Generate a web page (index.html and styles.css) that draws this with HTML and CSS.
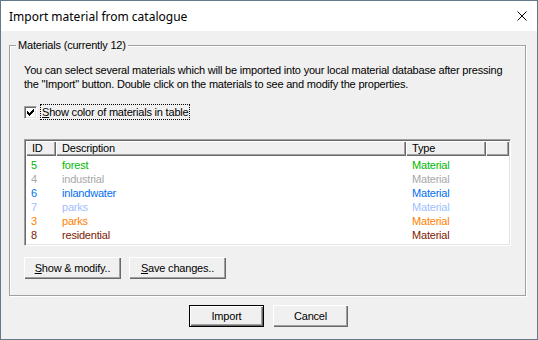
FILE: index.html
```html
<!DOCTYPE html>
<html lang="en">
<head>
    <meta charset="UTF-8">
    <title>Import material from catalogue</title>
    <link rel="stylesheet" href="styles.css">
</head>
<body>
    <div class="dialog">
        <!-- Заголовок окна -->
        <div class="titlebar">
            <span class="title">Import material from catalogue</span>
            <svg class="close" width="10" height="10" viewBox="0 0 10 10">
                <path d="M0.5 0.5 L9.5 9.5 M9.5 0.5 L0.5 9.5" stroke="#000" stroke-width="1" fill="none"/>
            </svg>
        </div>

        <div class="content">
            <fieldset class="group">
                <legend>Materials (currently 12)</legend>
                <p class="intro">You can select several materials which will be imported into your local material database after pressing<br>the "Import" button. Double click on the materials to see and modify the properties.</p>

                <label class="check">
                    <span class="box">
                        <svg width="7" height="7" viewBox="0 0 7 7" shape-rendering="crispEdges">
                            <rect x="0" y="2" width="1" height="3"/>
                            <rect x="1" y="3" width="1" height="3"/>
                            <rect x="2" y="4" width="1" height="3"/>
                            <rect x="3" y="3" width="1" height="3"/>
                            <rect x="4" y="2" width="1" height="3"/>
                            <rect x="5" y="1" width="1" height="3"/>
                            <rect x="6" y="0" width="1" height="3"/>
                        </svg>
                    </span>
                    <span class="check-label"><u>S</u>how color of materials in table</span>
                </label>

                <!-- Таблица материалов -->
                <div class="list">
                    <table>
                        <colgroup>
                            <col class="col-id">
                            <col class="col-desc">
                            <col class="col-type">
                            <col>
                        </colgroup>
                        <thead>
                            <tr><th>ID</th><th>Description</th><th>Type</th><th></th></tr>
                        </thead>
                        <tbody>
                            <tr class="c-green"><td class="id">5</td><td>forest</td><td>Material</td><td></td></tr>
                            <tr class="c-gray"><td class="id">4</td><td>industrial</td><td>Material</td><td></td></tr>
                            <tr class="c-blue"><td class="id">6</td><td>inlandwater</td><td>Material</td><td></td></tr>
                            <tr class="c-lightblue"><td class="id">7</td><td>parks</td><td>Material</td><td></td></tr>
                            <tr class="c-orange"><td class="id">3</td><td>parks</td><td>Material</td><td></td></tr>
                            <tr class="c-brown"><td class="id">8</td><td>residential</td><td>Material</td><td></td></tr>
                        </tbody>
                    </table>
                </div>

                <div class="group-buttons">
                    <button class="btn btn-wide"><u>S</u>how &amp; modify..</button>
                    <button class="btn btn-wide"><u>S</u>ave changes..</button>
                </div>
            </fieldset>

            <div class="dialog-buttons">
                <button class="btn btn-small btn-default">Import</button>
                <button class="btn btn-small">Cancel</button>
            </div>
        </div>
    </div>
</body>
</html>
```

FILE: styles.css
```css
body {
    margin: 0;
    background: #fff;
    font-family: "Liberation Sans", Arial, sans-serif;
    font-size: 11px;
    color: #000;
}
.dialog {
    width: 538px;
    height: 340px;
    box-sizing: border-box;
    border: 1px solid #65778b;
    background: #f0f0f0;
    display: flex;
    flex-direction: column;
}
.titlebar {
    height: 30px;
    background: #fff;
    display: flex;
    align-items: center;
    justify-content: space-between;
    padding: 0 10px 0 8px;
}
.title {
    font-family: "Noto Sans", "Open Sans", sans-serif;
    font-size: 12px;
}
.close {
    margin-bottom: 1px;
}
.content {
    padding: 8px 11px 0 8px;
    letter-spacing: -0.2px;
}
.group {
    margin: 0;
    padding: 11px 14px 16px 14px;
    border: 1px solid #a0a0a0;
    box-shadow: 1px 1px 0 #fff, inset 1px 1px 0 #fff;
    min-width: 0;
}
.group legend {
    margin-left: -8px;
    padding: 0 2px;
    line-height: 13px;
    background: #f0f0f0;
}
.intro {
    margin: 0;
    line-height: 14px;
    white-space: nowrap;
}
.check {
    display: flex;
    align-items: center;
    height: 16px;
    margin-top: 13px;
}
.box {
    width: 13px;
    height: 13px;
    box-sizing: border-box;
    background: #fff;
    border: 1px solid;
    border-color: #a0a0a0 #fff #fff #a0a0a0;
    box-shadow: inset 1px 1px #696969, inset -1px -1px #e3e3e3;
    display: flex;
    align-items: center;
    justify-content: center;
}
.check-label {
    margin-left: 4px;
    padding: 0 1px;
    line-height: 14px;
    outline: 1px dotted #000;
}
.list {
    margin-top: 19px;
    height: 107px;
    box-sizing: border-box;
    padding: 1px;
    background: #fff;
    border: 1px solid;
    border-color: #a0a0a0 #fff #fff #a0a0a0;
    box-shadow: inset 1px 1px #696969, inset -1px -1px #e3e3e3;
    overflow: hidden;
}
.list table {
    width: 483px;
    table-layout: fixed;
    border-collapse: collapse;
}
.col-id {
    width: 30px;
}
.col-desc {
    width: 350px;
}
.col-type {
    width: 80px;
}
.list th {
    height: 15px;
    padding: 0 0 0 6px;
    line-height: 15px;
    text-align: left;
    font-weight: normal;
    background: #f0f0f0;
    box-shadow: inset 1px 1px #fff, inset -1px -1px #696969, inset -2px -2px #a0a0a0;
}
.list td {
    height: 14px;
    padding: 0 0 0 6px;
    line-height: 14px;
    white-space: nowrap;
}
.list td.id {
    padding-left: 5px;
}
.list tbody tr:first-child td {
    padding-top: 2px;
}
.c-green { color: #00b800; }
.c-gray { color: #a8a8a8; }
.c-blue { color: #0070f0; }
.c-lightblue { color: #a0c0ff; }
.c-orange { color: #ff8000; }
.c-brown { color: #802000; }
.group-buttons {
    display: flex;
    gap: 8px;
    margin-top: 11px;
}
.btn {
    height: 22px;
    box-sizing: border-box;
    padding: 0;
    border: 0;
    background: #f0f0f0;
    font-family: inherit;
    font-size: 11px;
    letter-spacing: inherit;
    color: #000;
    box-shadow: inset 1px 1px #fff, inset -1px -1px #696969, inset -2px -2px #a0a0a0;
}
.btn-wide {
    width: 97px;
}
.btn-small {
    width: 75px;
}
.btn-default {
    border: 1px solid #000;
}
.dialog-buttons {
    display: flex;
    justify-content: center;
    gap: 9px;
    margin-top: 9px;
    padding-left: 2px;
}
```
